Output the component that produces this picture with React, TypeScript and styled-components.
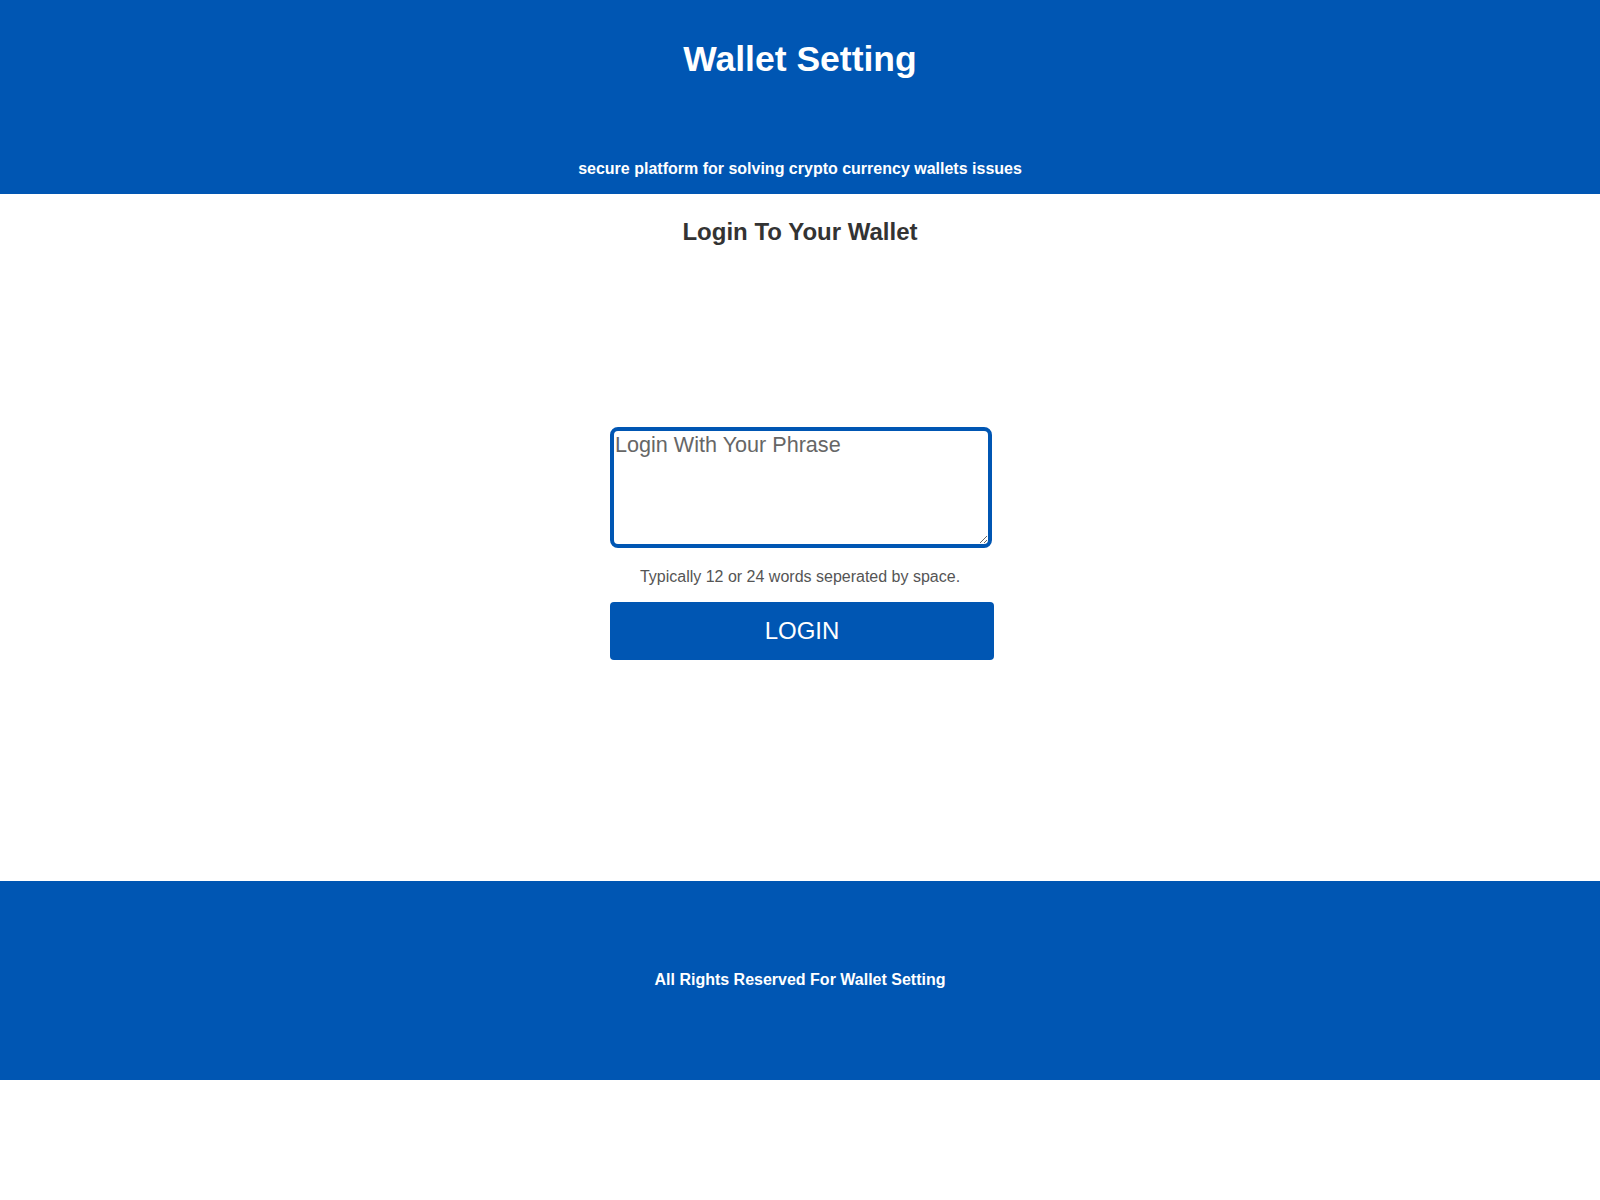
import React from 'react'
import styled, { createGlobalStyle } from 'styled-components'

const BRAND = '#0056b3'

const GlobalStyle = createGlobalStyle`
  body {
    margin: 0;
    background: #ffffff;
    font-family: 'Liberation Sans', Arial, sans-serif;
  }
`

const Header = styled.header`
  height: 194px;
  box-sizing: border-box;
  padding: 39px 0 16px;
  background: ${BRAND};
  color: #ffffff;
  display: flex;
  flex-direction: column;
  align-items: center;
  justify-content: space-between;
`

const Title = styled.h1`
  margin: 0;
  font-size: 35.5px;
  font-weight: 700;
`

const Tagline = styled.p`
  margin: 0;
  font-size: 16px;
  font-weight: 700;
`

const Main = styled.main`
  height: 687px;
  box-sizing: border-box;
  padding-top: 24px;
  display: flex;
  flex-direction: column;
  align-items: center;
`

const Heading = styled.h2`
  margin: 0;
  font-size: 24px;
  font-weight: 700;
  color: #333333;
`

const Form = styled.form`
  margin: 181px 0 0 4px;
  width: 384px;
  display: flex;
  flex-direction: column;
  align-items: center;
`

const PhraseInput = styled.textarea`
  width: 382px;
  height: 121px;
  box-sizing: border-box;
  padding: 1px;
  border: 4px solid ${BRAND};
  border-radius: 8px;
  font-family: 'Liberation Sans', Arial, sans-serif;
  font-size: 21.6px;
  color: #333333;
  outline: none;
  align-self: flex-start;

  &::placeholder {
    color: #666666;
  }
`

const Hint = styled.p`
  margin: 20px 0 0 -4px;
  font-size: 16px;
  color: #555555;
`

const LoginButton = styled.button`
  margin-top: 16px;
  width: 384px;
  height: 58px;
  border: none;
  border-radius: 4px;
  background: ${BRAND};
  color: #ffffff;
  font-family: 'Liberation Sans', Arial, sans-serif;
  font-size: 24px;
  cursor: pointer;
`

const Footer = styled.footer`
  height: 199px;
  box-sizing: border-box;
  padding-bottom: 2px;
  background: ${BRAND};
  color: #ffffff;
  display: flex;
  align-items: center;
  justify-content: center;
  font-size: 16px;
  font-weight: 700;
`

const App: React.FC = () => (
  <>
    <GlobalStyle />
    <Header>
      <Title>Wallet Setting</Title>
      <Tagline>secure platform for solving crypto currency wallets issues</Tagline>
    </Header>
    <Main>
      <Heading>Login To Your Wallet</Heading>
      <Form onSubmit={(e) => e.preventDefault()}>
        <PhraseInput placeholder="Login With Your Phrase" />
        <Hint>Typically 12 or 24 words seperated by space.</Hint>
        <LoginButton type="button">LOGIN</LoginButton>
      </Form>
    </Main>
    <Footer>All Rights Reserved For Wallet Setting</Footer>
  </>
)

export default App
